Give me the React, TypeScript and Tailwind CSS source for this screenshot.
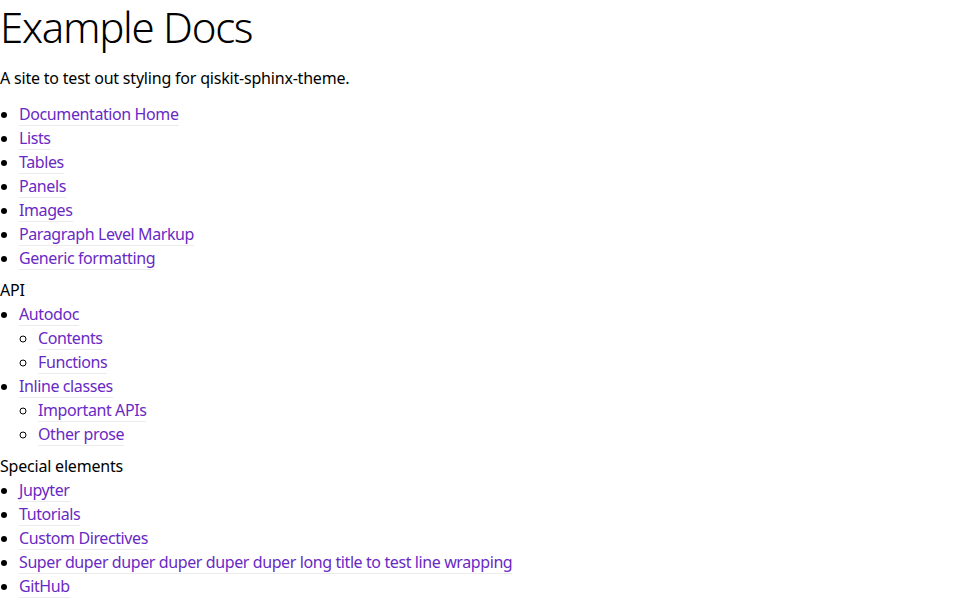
import React from "react";

const font = { fontFamily: '"Noto Sans", "Liberation Sans", sans-serif' };

function L({ children }: { children: React.ReactNode }) {
  return (
    <a
      href="#"
      className="text-[#6929c4] no-underline tracking-[-0.4px] border-b border-[#ebebeb]"
    >
      {children}
    </a>
  );
}

export default function App() {
  return (
    <div className="bg-white text-black text-[16px] leading-[24px] tracking-[-0.2px] min-h-[598px]" style={font}>
      <h1 className="m-0 text-[42px] leading-[54px] font-light tracking-[-1.3px]">Example Docs</h1>
      <p className="mt-3">A site to test out styling for qiskit-sphinx-theme.</p>
      <ul className="mt-3 list-disc pl-[19px]">
        <li><L>Documentation Home</L></li>
        <li><L>Lists</L></li>
        <li><L>Tables</L></li>
        <li><L>Panels</L></li>
        <li><L>Images</L></li>
        <li><L>Paragraph Level Markup</L></li>
        <li><L>Generic formatting</L></li>
      </ul>
      <p className="mt-2">API</p>
      <ul className="list-disc pl-[19px]">
        <li>
          <L>Autodoc</L>
          <ul className="list-[circle] pl-[19px]">
            <li><L>Contents</L></li>
            <li><L>Functions</L></li>
          </ul>
        </li>
        <li>
          <L>Inline classes</L>
          <ul className="list-[circle] pl-[19px]">
            <li><L>Important APIs</L></li>
            <li><L>Other prose</L></li>
          </ul>
        </li>
      </ul>
      <p className="mt-2">Special elements</p>
      <ul className="list-disc pl-[19px]">
        <li><L>Jupyter</L></li>
        <li><L>Tutorials</L></li>
        <li><L>Custom Directives</L></li>
        <li><L>Super duper duper duper duper duper long title to test line wrapping</L></li>
        <li><L>GitHub</L></li>
      </ul>
    </div>
  );
}
